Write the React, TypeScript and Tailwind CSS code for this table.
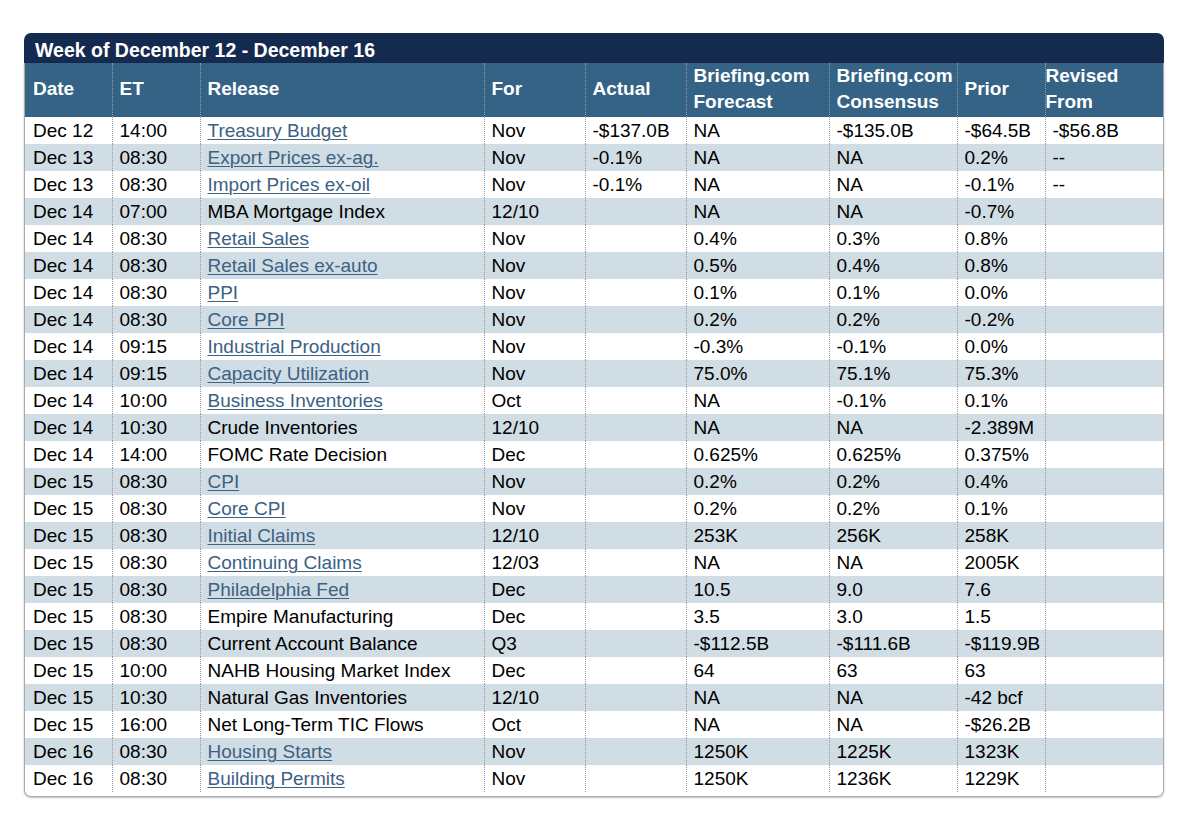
import React from 'react';

type Row = {
  date: string;
  et: string;
  release: string;
  link?: boolean;
  period: string;
  actual?: string;
  forecast: string;
  consensus: string;
  prior: string;
  revised?: string;
};

const rows: Row[] = [
  { date: 'Dec 12', et: '14:00', release: 'Treasury Budget', link: true, period: 'Nov', actual: '-$137.0B', forecast: 'NA', consensus: '-$135.0B', prior: '-$64.5B', revised: '-$56.8B' },
  { date: 'Dec 13', et: '08:30', release: 'Export Prices ex-ag.', link: true, period: 'Nov', actual: '-0.1%', forecast: 'NA', consensus: 'NA', prior: '0.2%', revised: '--' },
  { date: 'Dec 13', et: '08:30', release: 'Import Prices ex-oil', link: true, period: 'Nov', actual: '-0.1%', forecast: 'NA', consensus: 'NA', prior: '-0.1%', revised: '--' },
  { date: 'Dec 14', et: '07:00', release: 'MBA Mortgage Index', period: '12/10', forecast: 'NA', consensus: 'NA', prior: '-0.7%' },
  { date: 'Dec 14', et: '08:30', release: 'Retail Sales', link: true, period: 'Nov', forecast: '0.4%', consensus: '0.3%', prior: '0.8%' },
  { date: 'Dec 14', et: '08:30', release: 'Retail Sales ex-auto', link: true, period: 'Nov', forecast: '0.5%', consensus: '0.4%', prior: '0.8%' },
  { date: 'Dec 14', et: '08:30', release: 'PPI', link: true, period: 'Nov', forecast: '0.1%', consensus: '0.1%', prior: '0.0%' },
  { date: 'Dec 14', et: '08:30', release: 'Core PPI', link: true, period: 'Nov', forecast: '0.2%', consensus: '0.2%', prior: '-0.2%' },
  { date: 'Dec 14', et: '09:15', release: 'Industrial Production', link: true, period: 'Nov', forecast: '-0.3%', consensus: '-0.1%', prior: '0.0%' },
  { date: 'Dec 14', et: '09:15', release: 'Capacity Utilization', link: true, period: 'Nov', forecast: '75.0%', consensus: '75.1%', prior: '75.3%' },
  { date: 'Dec 14', et: '10:00', release: 'Business Inventories', link: true, period: 'Oct', forecast: 'NA', consensus: '-0.1%', prior: '0.1%' },
  { date: 'Dec 14', et: '10:30', release: 'Crude Inventories', period: '12/10', forecast: 'NA', consensus: 'NA', prior: '-2.389M' },
  { date: 'Dec 14', et: '14:00', release: 'FOMC Rate Decision', period: 'Dec', forecast: '0.625%', consensus: '0.625%', prior: '0.375%' },
  { date: 'Dec 15', et: '08:30', release: 'CPI', link: true, period: 'Nov', forecast: '0.2%', consensus: '0.2%', prior: '0.4%' },
  { date: 'Dec 15', et: '08:30', release: 'Core CPI', link: true, period: 'Nov', forecast: '0.2%', consensus: '0.2%', prior: '0.1%' },
  { date: 'Dec 15', et: '08:30', release: 'Initial Claims', link: true, period: '12/10', forecast: '253K', consensus: '256K', prior: '258K' },
  { date: 'Dec 15', et: '08:30', release: 'Continuing Claims', link: true, period: '12/03', forecast: 'NA', consensus: 'NA', prior: '2005K' },
  { date: 'Dec 15', et: '08:30', release: 'Philadelphia Fed', link: true, period: 'Dec', forecast: '10.5', consensus: '9.0', prior: '7.6' },
  { date: 'Dec 15', et: '08:30', release: 'Empire Manufacturing', period: 'Dec', forecast: '3.5', consensus: '3.0', prior: '1.5' },
  { date: 'Dec 15', et: '08:30', release: 'Current Account Balance', period: 'Q3', forecast: '-$112.5B', consensus: '-$111.6B', prior: '-$119.9B' },
  { date: 'Dec 15', et: '10:00', release: 'NAHB Housing Market Index', period: 'Dec', forecast: '64', consensus: '63', prior: '63' },
  { date: 'Dec 15', et: '10:30', release: 'Natural Gas Inventories', period: '12/10', forecast: 'NA', consensus: 'NA', prior: '-42 bcf' },
  { date: 'Dec 15', et: '16:00', release: 'Net Long-Term TIC Flows', period: 'Oct', forecast: 'NA', consensus: 'NA', prior: '-$26.2B' },
  { date: 'Dec 16', et: '08:30', release: 'Housing Starts', link: true, period: 'Nov', forecast: '1250K', consensus: '1225K', prior: '1323K' },
  { date: 'Dec 16', et: '08:30', release: 'Building Permits', link: true, period: 'Nov', forecast: '1250K', consensus: '1236K', prior: '1229K' },
];

// dotted column rule shared by header and body cells
const sep = 'border-l border-dotted border-[#9a9a9a] pl-[7px]';

const EconomicCalendar: React.FC = () => {
  return (
    <div className="ml-[24px] pt-[33px] pb-[20px] w-[1140px] font-['Liberation_Sans',Arial,sans-serif] text-[19px] leading-[27px] text-black">
      <div className="h-[30px] rounded-t-[7px] bg-[#152a4f] pl-[11px] pt-[4px] text-[19.5px] leading-[26px] font-bold text-white">
        Week of December 12 - December 16
      </div>
      <div className="rounded-b-[7px] border-x border-b border-[#a9a9a9] pb-[4px] shadow-[0_1px_2px_rgba(0,0,0,0.25)] overflow-hidden">
        <table className="w-full table-fixed border-collapse">
          <colgroup>
            <col className="w-[87px]" />
            <col className="w-[88px]" />
            <col className="w-[284px]" />
            <col className="w-[101px]" />
            <col className="w-[101px]" />
            <col className="w-[143px]" />
            <col className="w-[128px]" />
            <col className="w-[88px]" />
            <col />
          </colgroup>
          <thead>
            <tr className="h-[54px] bg-[#346386] text-left align-middle font-bold leading-[26px] text-white [&>th]:pb-[2px]">
              <th className="pl-[8px]">Date</th>
              <th className={sep}>ET</th>
              <th className={sep}>Release</th>
              <th className={sep}>For</th>
              <th className={sep}>Actual</th>
              <th className={sep}>Briefing.com<br />Forecast</th>
              <th className={sep}>Briefing.com<br />Consensus</th>
              <th className={sep}>Prior</th>
              <th className="border-l border-dotted border-[#9a9a9a] pl-0">Revised<br />From</th>
            </tr>
          </thead>
          <tbody>
            {rows.map((r, i) => (
              <tr key={i} className={i % 2 === 1 ? 'h-[27px] bg-[#d0dde4]' : 'h-[27px] bg-white'}>
                <td className="pl-[8px] whitespace-nowrap">{r.date}</td>
                <td className={sep + ' whitespace-nowrap'}>{r.et}</td>
                <td className={sep + ' whitespace-nowrap'}>
                  {r.link ? (
                    <a href="#" className="text-[#3c6183] underline decoration-1 underline-offset-[2px]">{r.release}</a>
                  ) : (
                    r.release
                  )}
                </td>
                <td className={sep + ' whitespace-nowrap'}>{r.period}</td>
                <td className={sep + ' whitespace-nowrap'}>{r.actual ?? ''}</td>
                <td className={sep + ' whitespace-nowrap'}>{r.forecast}</td>
                <td className={sep + ' whitespace-nowrap'}>{r.consensus}</td>
                <td className={sep + ' whitespace-nowrap'}>{r.prior}</td>
                <td className={sep + ' whitespace-nowrap'}>{r.revised ?? ''}</td>
              </tr>
            ))}
          </tbody>
        </table>
      </div>
    </div>
  );
};

export default function App() {
  return (
    <div className="min-h-screen bg-white">
      <EconomicCalendar />
    </div>
  );
}
